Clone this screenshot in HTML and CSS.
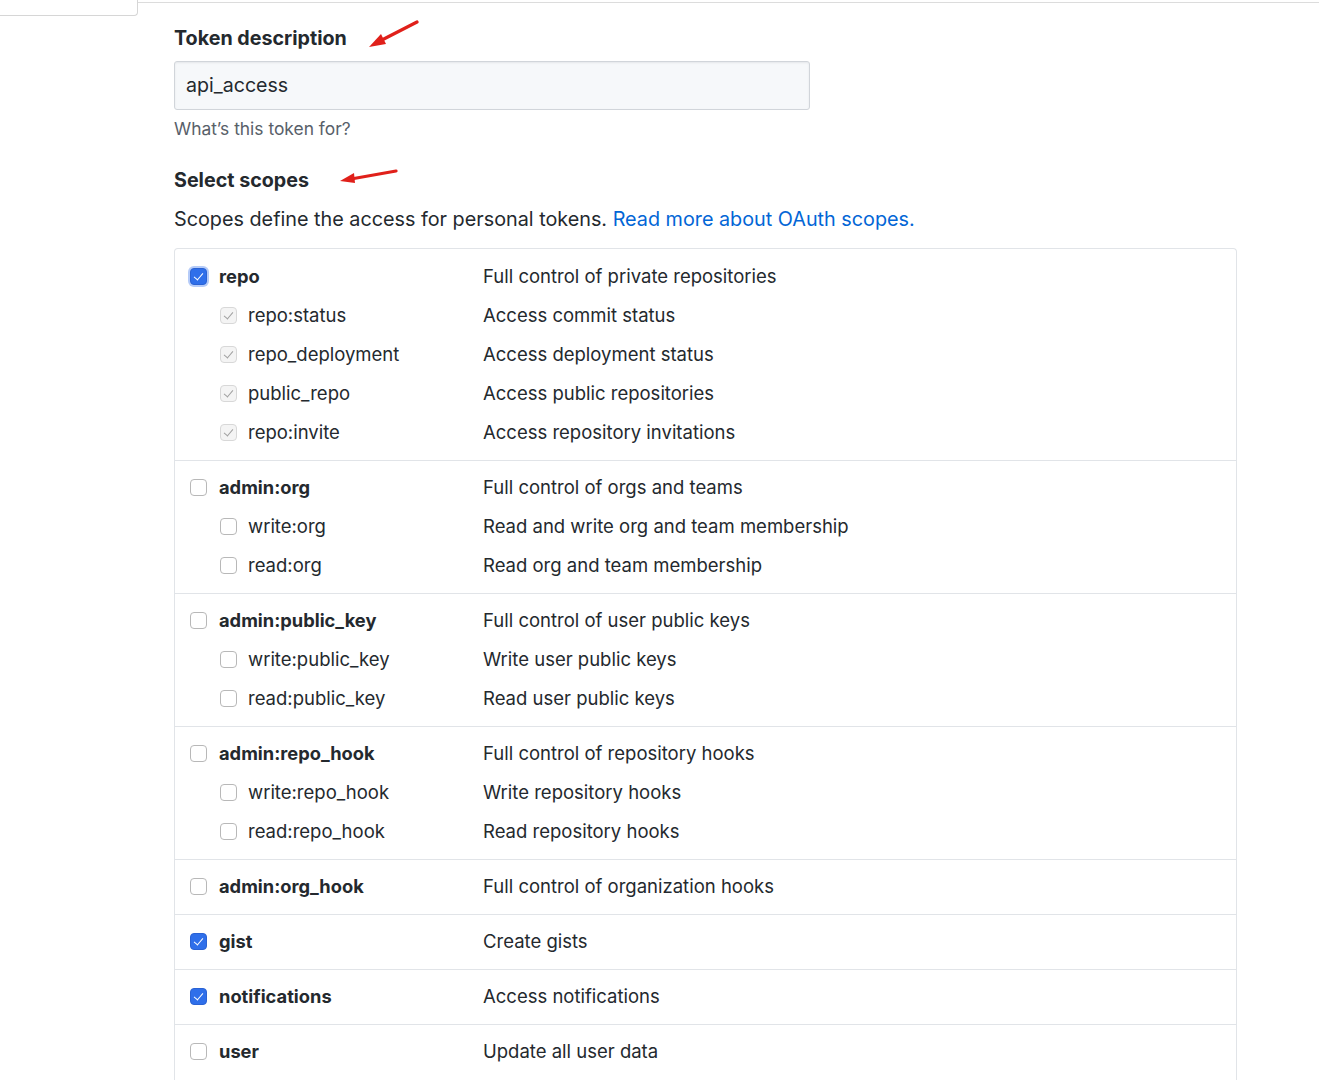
FILE: index.html
```html
<!DOCTYPE html>
<html>
<head>
<meta charset="utf-8">
<link rel="stylesheet" href="styles.css">
</head>
<body>
<div class="topbar">
  <div class="side-stub"></div>
  <div class="top-line"></div>
</div>
<main class="content">
  <h3 class="heading first">Token description
    <svg class="arrow arrow1" width="52" height="30" viewBox="0 0 52 30"><path d="M49 2 L10 22" stroke="#e0201a" stroke-width="3.2" stroke-linecap="round"/><path d="M1 27 L13 14 L18 24 Z" fill="#e0201a"/></svg>
  </h3>
  <div class="input">api_access</div>
  <p class="hint">What’s this token for?</p>
  <h3 class="heading second">Select scopes
    <svg class="arrow arrow2" width="60" height="16" viewBox="0 0 60 16"><path d="M57 3 L12 11" stroke="#e0201a" stroke-width="3.2" stroke-linecap="round"/><path d="M1 13 L15 5 L16 15 Z" fill="#e0201a"/></svg>
  </h3>
  <p class="lead">Scopes define the access for personal tokens. <a href="#">Read more about OAuth scopes.</a></p>

  <div class="scopes">
    <div class="group">
      <div class="row main"><span class="cb checked focus"></span><span class="name">repo</span><span class="desc">Full control of private repositories</span></div>
      <div class="row sub"><span class="cb disabled"></span><span class="name">repo:status</span><span class="desc">Access commit status</span></div>
      <div class="row sub"><span class="cb disabled"></span><span class="name">repo_deployment</span><span class="desc">Access deployment status</span></div>
      <div class="row sub"><span class="cb disabled"></span><span class="name">public_repo</span><span class="desc">Access public repositories</span></div>
      <div class="row sub"><span class="cb disabled"></span><span class="name">repo:invite</span><span class="desc">Access repository invitations</span></div>
    </div>
    <div class="group">
      <div class="row main"><span class="cb"></span><span class="name">admin:org</span><span class="desc">Full control of orgs and teams</span></div>
      <div class="row sub"><span class="cb"></span><span class="name">write:org</span><span class="desc">Read and write org and team membership</span></div>
      <div class="row sub"><span class="cb"></span><span class="name">read:org</span><span class="desc">Read org and team membership</span></div>
    </div>
    <div class="group">
      <div class="row main"><span class="cb"></span><span class="name">admin:public_key</span><span class="desc">Full control of user public keys</span></div>
      <div class="row sub"><span class="cb"></span><span class="name">write:public_key</span><span class="desc">Write user public keys</span></div>
      <div class="row sub"><span class="cb"></span><span class="name">read:public_key</span><span class="desc">Read user public keys</span></div>
    </div>
    <div class="group">
      <div class="row main"><span class="cb"></span><span class="name">admin:repo_hook</span><span class="desc">Full control of repository hooks</span></div>
      <div class="row sub"><span class="cb"></span><span class="name">write:repo_hook</span><span class="desc">Write repository hooks</span></div>
      <div class="row sub"><span class="cb"></span><span class="name">read:repo_hook</span><span class="desc">Read repository hooks</span></div>
    </div>
    <div class="group">
      <div class="row main"><span class="cb"></span><span class="name">admin:org_hook</span><span class="desc">Full control of organization hooks</span></div>
    </div>
    <div class="group">
      <div class="row main"><span class="cb checked"></span><span class="name">gist</span><span class="desc">Create gists</span></div>
    </div>
    <div class="group">
      <div class="row main"><span class="cb checked"></span><span class="name">notifications</span><span class="desc">Access notifications</span></div>
    </div>
    <div class="group last">
      <div class="row main"><span class="cb"></span><span class="name">user</span><span class="desc">Update all user data</span></div>
    </div>
  </div>
</main>
</body>
</html>
```

FILE: styles.css
```css
html, body {
  margin: 0;
  padding: 0;
  background: #ffffff;
}
body {
  font-family: Inter, "Liberation Sans", sans-serif;
  color: #24292e;
  overflow: hidden;
  height: 1080px;
}
.topbar {
  display: flex;
  height: 16px;
}
.side-stub {
  width: 137px;
  height: 15px;
  border-right: 1px solid #d6d6d6;
  border-bottom: 1px solid #d6d6d6;
  border-bottom-right-radius: 4px;
}
.top-line {
  flex: 1;
  margin-top: 2px;
  border-top: 1px solid #dcdcdc;
}
.content {
  margin-left: 174px;
}
.heading {
  margin: 0;
  font-size: 19.7px;
  font-weight: 700;
  line-height: 24px;
  position: relative;
}
.heading.first { margin-top: 10px; }
.heading.second { margin-top: 29px; }
.arrow {
  position: absolute;
}
.arrow1 { left: 194px; top: -6px; }
.arrow2 { left: 165px; top: 0; }
.input {
  margin-top: 11px;
  box-sizing: border-box;
  width: 636px;
  height: 49px;
  background: #f6f8fa;
  border: 1px solid #d1d5da;
  border-radius: 3px;
  box-shadow: inset 0 1px 2px rgba(27,31,35,0.075);
  font-size: 19.6px;
  line-height: 47px;
  padding: 0 11px;
}
.hint {
  margin: 9px 0 0;
  font-size: 17.4px;
  line-height: 20px;
  color: #586069;
}
.lead {
  margin: 15px 0 0;
  font-size: 19.8px;
  line-height: 24px;
}
.lead a {
  color: #0366d6;
  text-decoration: none;
}
.scopes {
  margin-top: 17px;
  width: 1063px;
  box-sizing: border-box;
  border: 1px solid #e1e4e8;
  border-bottom: none;
  border-radius: 4px 4px 0 0;
}
.group {
  padding: 7px 0 8px;
  border-top: 1px solid #e1e4e8;
}
.group:first-child {
  border-top: none;
  padding-top: 8px;
}
.group.last {
  padding-bottom: 40px;
}
.row {
  display: grid;
  grid-template-columns: 17px 1fr 753px;
  align-items: center;
  box-sizing: border-box;
  height: 39px;
  padding-bottom: 2px;
  font-size: 18.5px;
  padding-left: 15px;
}
.row.sub {
  padding-left: 45px;
}
.row .cb {
  margin-top: 2px;
}
.row .name {
  padding-left: 12px;
}
.row.sub .name {
  padding-left: 11px;
}
.row.main .name {
  font-weight: 700;
  font-size: 18.3px;
}
.desc {
  color: #24292e;
}
.cb {
  box-sizing: border-box;
  width: 17px;
  height: 17px;
  border: 1px solid #b8b8b8;
  border-radius: 4px;
  background: #fff;
  position: relative;
}
.cb.checked {
  background: #2f6fea;
  border-color: #2a62d4;
}
.cb.checked::after,
.cb.disabled::after {
  content: "";
  position: absolute;
  left: 5px;
  top: 2px;
  width: 4px;
  height: 8px;
  border-right: 1.6px solid #fff;
  border-bottom: 1.6px solid #fff;
  transform: rotate(40deg);
}
.cb.focus {
  box-shadow: 0 0 0 2px rgba(90,140,240,0.45);
}
.cb.disabled {
  background: #f4f4f4;
  border-color: #d8d8d8;
}
.cb.disabled::after {
  border-color: #a0a0a0;
  border-right-width: 1.2px;
  border-bottom-width: 1.2px;
}
```
